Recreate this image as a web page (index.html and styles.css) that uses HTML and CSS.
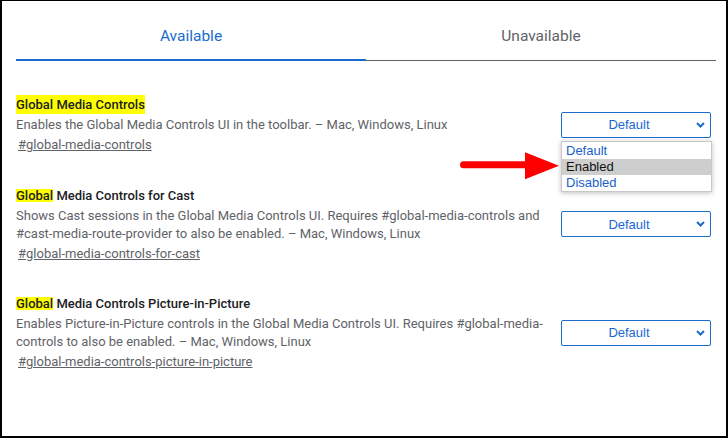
FILE: index.html
```html
<!DOCTYPE html>
<html lang="en">
<head>
<meta charset="utf-8">
<title>Experiments</title>
<link rel="stylesheet" href="styles.css">
</head>
<body>
<div class="frame">
  <div class="tabs">
    <div class="tab active">Available</div>
    <div class="tab">Unavailable</div>
  </div>

  <div class="experiments">
    <div class="exp">
      <div class="info">
        <h3 class="name"><mark class="hl big">Global Media Controls</mark></h3>
        <p class="desc">Enables the Global Media Controls UI in the toolbar. – Mac, Windows, Linux</p>
        <a class="permalink" href="#">#global-media-controls</a>
      </div>
      <div class="actions">
        <div class="select"><span class="select-text">Default</span><svg class="chev" width="9" height="6" viewBox="0 0 9 6"><path d="M1 1 L4.5 4.5 L8 1" fill="none" stroke="#1a6ccc" stroke-width="2"/></svg></div>
        <div class="dropdown">
          <div class="opt">Default</div>
          <div class="opt sel">Enabled</div>
          <div class="opt">Disabled</div>
        </div>
      </div>
    </div>

    <div class="exp">
      <div class="info">
        <h3 class="name"><mark class="hl">Global</mark> Media Controls for Cast</h3>
        <p class="desc">Shows Cast sessions in the Global Media Controls UI. Requires #global-media-controls and #cast-media-route-provider to also be enabled. – Mac, Windows, Linux</p>
        <a class="permalink" href="#">#global-media-controls-for-cast</a>
      </div>
      <div class="actions">
        <div class="select"><span class="select-text">Default</span><svg class="chev" width="9" height="6" viewBox="0 0 9 6"><path d="M1 1 L4.5 4.5 L8 1" fill="none" stroke="#1a6ccc" stroke-width="2"/></svg></div>
      </div>
    </div>

    <div class="exp">
      <div class="info">
        <h3 class="name"><mark class="hl">Global</mark> Media Controls Picture-in-Picture</h3>
        <p class="desc">Enables Picture-in-Picture controls in the Global Media Controls UI. Requires #global-media-controls to also be enabled. – Mac, Windows, Linux</p>
        <a class="permalink" href="#">#global-media-controls-picture-in-picture</a>
      </div>
      <div class="actions">
        <div class="select"><span class="select-text">Default</span><svg class="chev" width="9" height="6" viewBox="0 0 9 6"><path d="M1 1 L4.5 4.5 L8 1" fill="none" stroke="#1a6ccc" stroke-width="2"/></svg></div>
      </div>
    </div>
  </div>

  <svg class="arrow" width="102" height="32" viewBox="0 0 102 32">
    <path d="M3.5 11.2 H66 V18.2 H3.5 A3.5 3.5 0 0 1 3.5 11.2 Z" fill="#ff0000"/>
    <path d="M65 2.3 L99 15.7 L65 29.3 Z" fill="#ff0000"/>
  </svg>
</div>
</body>
</html>
```

FILE: styles.css
```css
* { box-sizing: border-box; }
html, body { margin: 0; padding: 0; background: #fff; }
body { font-family: Roboto, "Liberation Sans", Arial, sans-serif; }

.frame {
  position: relative;
  width: 728px;
  height: 438px;
  border-style: solid;
  border-color: #000;
  border-width: 1px 2px 2px 2px;
  padding: 0 10px 0 14px;
  background: #fff;
  overflow: hidden;
}

.tabs { display: flex; align-items: flex-end; }
.tab {
  flex: 1;
  height: 60px;
  padding-top: 25px;
  line-height: 20px;
  font-size: 15.5px;
  text-align: center;
  color: #5f6368;
  border-bottom: 1px solid #5f6368;
}
.tab.active {
  color: #1a6ccc;
  border-bottom: 2px solid #1a6ccc;
}

.experiments { margin-top: 34px; }
.exp {
  display: flex;
  align-items: center;
  margin-bottom: 31.5px;
}
.info { flex: 1; min-width: 0; }
.name {
  margin: 0;
  font-size: 13px;
  font-weight: 500;
  line-height: 19px;
  color: #202124;
}
.hl {
  display: inline-block;
  background: #ffff00;
  color: inherit;
  line-height: 13px;
}
.hl.big { line-height: 19px; }
.desc {
  margin: 2px 0 0;
  font-size: 13px;
  line-height: 18px;
  color: #5f6368;
}
.permalink {
  display: inline-block;
  margin: 2px 0 0 2px;
  font-size: 13px;
  line-height: 18px;
  color: #5f6368;
  text-decoration: underline;
}

.actions {
  position: relative;
  width: 150px;
  margin: 0 5px 0 5px;
}
.select {
  display: flex;
  align-items: center;
  height: 26px;
  border: 1px solid #1a6ccc;
  border-radius: 2px;
  padding-right: 5px;
  font-family: "Liberation Sans", Arial, sans-serif;
  font-size: 13px;
  color: #1967d2;
}
.select-text { flex: 1; text-align: center; }
.chev { display: block; }

.dropdown {
  position: absolute;
  top: 29px;
  left: 0;
  width: 151px;
  padding: 1px 0 0;
  background: #fff;
  border: 1px solid #c8c8c8;
  box-shadow: 0 1px 5px rgba(0,0,0,0.25);
  font-family: "Liberation Sans", Arial, sans-serif;
  font-size: 13px;
  z-index: 2;
}
.opt {
  height: 16px;
  line-height: 16px;
  padding-left: 4px;
  color: #1a5fc8;
}
.opt.sel { background: #cecece; color: #111; }

.arrow {
  position: absolute;
  left: 458px;
  top: 149px;
  z-index: 3;
}
```
